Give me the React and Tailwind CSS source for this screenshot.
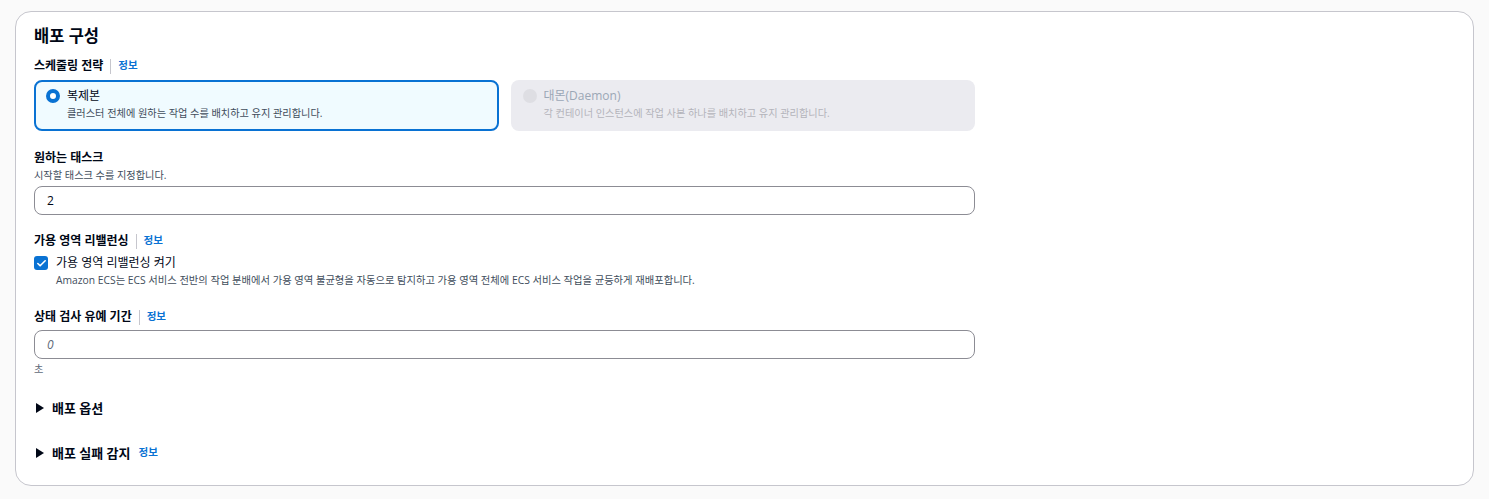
import { Check } from "lucide-react"

const font = "font-['Open_Sans','Noto_Sans_CJK_KR',sans-serif]"

function InfoLink({ divider = true }) {
  return (
    <span className="flex items-center">
      {divider && <span className="mx-[7px] h-[15px] w-px bg-[#c6c6cd]" />}
      <span className="text-[10.5px] font-bold text-[#0972d3]">정보</span>
    </span>
  )
}

function FieldLabel({ children, info }) {
  return (
    <div className="flex h-[16px] items-center">
      <span className="text-[12px] font-bold leading-[16px] text-[#000716]">{children}</span>
      {info && <InfoLink />}
    </div>
  )
}

function Tile({ title, description, selected, disabled }) {
  return (
    <div
      className={
        selected
          ? "flex-1 rounded-[8px] border-2 border-[#0972d3] bg-[#f0fbff] pl-[10px] pt-[6px] pb-[9px]"
          : "flex-1 rounded-[8px] border-2 border-transparent bg-[#ebebf0] pl-[10px] pt-[6px] pb-[9px]"
      }
    >
      <div className="flex h-[16px] items-center gap-[7px]">
        {selected ? (
          <span className="h-[14px] w-[14px] rounded-full border-[4px] border-[#0972d3] bg-white" />
        ) : (
          <span className="h-[14px] w-[14px] rounded-full bg-[#dedee3]" />
        )}
        <span className={disabled ? "text-[12px] leading-[16px] text-[#9ba7b6]" : "text-[12px] leading-[16px] text-[#000716]"}>
          {title}
        </span>
      </div>
      <div
        className={
          disabled
            ? "mt-[2px] pl-[21px] text-[10.2px] leading-[14px] text-[#b4b4bb]"
            : "mt-[2px] pl-[21px] text-[10.2px] leading-[14px] text-[#414d5c]"
        }
      >
        {description}
      </div>
    </div>
  )
}

function TextInput({ value, placeholder }) {
  return (
    <div className="flex h-[29px] w-[941px] items-center rounded-[8px] border border-[#8c8c94] bg-white px-[12px]">
      {value ? (
        <span className="text-[12px] text-[#000716]">{value}</span>
      ) : (
        <span className="text-[12px] italic text-[#5f6b7a]">{placeholder}</span>
      )}
    </div>
  )
}

function Expander({ children, info }) {
  return (
    <div className="flex h-[18px] items-center">
      <svg width="8" height="10" viewBox="0 0 8 10" className="ml-[2px] mr-[8px]">
        <path d="M0 0 L8 5 L0 10 Z" fill="#000716" />
      </svg>
      <span className="text-[13px] font-bold leading-[18px] text-[#000716]">{children}</span>
      {info && (
        <span className="ml-[8px]">
          <InfoLink divider={false} />
        </span>
      )}
    </div>
  )
}

export default function App() {
  return (
    <div className={`min-h-[499px] w-[1489px] bg-[#fafafa] pt-[11px] ${font}`}>
      <div className="mx-[15px] rounded-[16px] border border-[#c6c6cd] bg-white pl-[18px] pt-[14px] pb-[23px]">
        <h2 className="h-[20px] text-[16.5px] font-bold leading-[20px] text-[#000716]">배포 구성</h2>

        <div className="mt-[12px]">
          <FieldLabel info>스케줄링 전략</FieldLabel>
        </div>
        <div className="mt-[6px] flex w-[941px] gap-[12px]">
          <Tile selected title="복제본" description="클러스터 전체에 원하는 작업 수를 배치하고 유지 관리합니다." />
          <Tile disabled title="대몬(Daemon)" description="각 컨테이너 인스턴스에 작업 사본 하나를 배치하고 유지 관리합니다." />
        </div>

        <div className="mt-[19px]">
          <FieldLabel>원하는 태스크</FieldLabel>
        </div>
        <div className="mt-[2px] text-[10.2px] leading-[14px] text-[#414d5c]">시작할 태스크 수를 지정합니다.</div>
        <div className="mt-[4px]">
          <TextInput value="2" />
        </div>

        <div className="mt-[18px]">
          <FieldLabel info>가용 영역 리밸런싱</FieldLabel>
        </div>
        <div className="mt-[6px] flex h-[16px] items-center gap-[8px]">
          <span className="flex h-[14px] w-[14px] items-center justify-center rounded-[3px] bg-[#0972d3]">
            <Check className="h-[11px] w-[11px] text-white" strokeWidth={3.5} />
          </span>
          <span className="text-[12px] leading-[16px] text-[#000716]">가용 영역 리밸런싱 켜기</span>
        </div>
        <div className="mt-[2px] pl-[22px] text-[10.3px] leading-[14px] text-[#414d5c]">
          Amazon ECS는 ECS 서비스 전반의 작업 분배에서 가용 영역 불균형을 자동으로 탐지하고 가용 영역 전체에 ECS 서비스 작업을 균등하게 재배포합니다.
        </div>

        <div className="mt-[22px]">
          <FieldLabel info>상태 검사 유예 기간</FieldLabel>
        </div>
        <div className="mt-[5px]">
          <TextInput placeholder="0" />
        </div>
        <div className="mt-[3px] text-[10.2px] leading-[14px] text-[#5f6b7a]">초</div>

        <div className="mt-[23px]">
          <Expander>배포 옵션</Expander>
        </div>
        <div className="mt-[27px]">
          <Expander info>배포 실패 감지</Expander>
        </div>
      </div>
    </div>
  )
}
